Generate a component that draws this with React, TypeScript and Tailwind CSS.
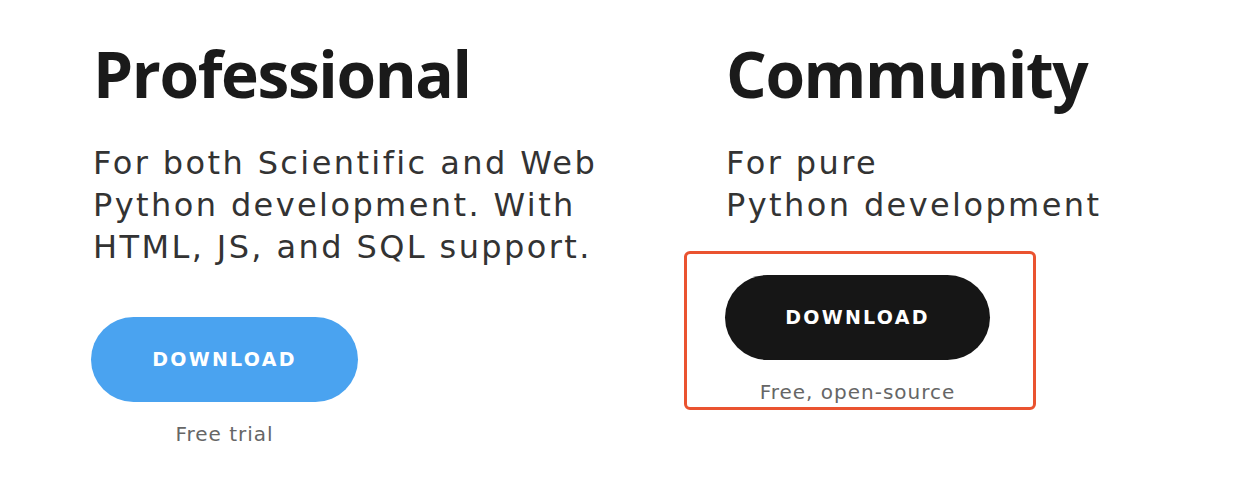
import React from "react";

const body = { fontFamily: '"DejaVu Sans", "Open Sans", sans-serif' };

export default function App() {
  return (
    <div className="w-[1240px] h-[483px] bg-white overflow-hidden" style={{ fontFamily: '"Open Sans", "Noto Sans", sans-serif' }}>
      <div className="flex pl-[93px] pt-[34px]">
        <div className="w-[633px] flex flex-col">
          <h1 className="text-[64px] leading-[80px] font-bold text-[#1a1a1a] tracking-[-1.4px]">Professional</h1>
          <p className="mt-[28px] text-[32px] leading-[42px] text-[#333] tracking-[2.4px]" style={body}>
            For both Scientific and Web<br />Python development. With<br />HTML, JS, and SQL support.
          </p>
          <div className="mt-[49px] w-[267px] flex flex-col items-center -ml-[2px]">
            <button className="w-[267px] h-[85px] rounded-full bg-[#4aa3f0] text-white text-[19px] font-bold tracking-[2.3px]" style={body}>DOWNLOAD</button>
            <div className="mt-[17px] text-[20px] leading-[30px] text-[#666] tracking-[1px]" style={body}>Free trial</div>
          </div>
        </div>
        <div className="flex flex-col">
          <h1 className="text-[64px] leading-[80px] font-bold text-[#1a1a1a] tracking-[-1.4px]">Community</h1>
          <p className="mt-[28px] text-[32px] leading-[42px] text-[#333] tracking-[2.4px]" style={body}>
            For pure<br />Python development
          </p>
          <div className="mt-[25px] -ml-[42px] w-[352px] h-[159px] border-[3px] border-[#ea5330] rounded-[6px] pl-[38px] pt-[21px] flex flex-col">
            <div className="w-[265px] flex flex-col items-center">
              <button className="w-[265px] h-[85px] rounded-full bg-[#161616] text-white text-[19px] font-bold tracking-[2.3px]" style={body}>DOWNLOAD</button>
              <div className="mt-[17px] text-[20px] leading-[30px] text-[#666] tracking-[1px]" style={body}>Free, open-source</div>
            </div>
          </div>
        </div>
      </div>
    </div>
  );
}
